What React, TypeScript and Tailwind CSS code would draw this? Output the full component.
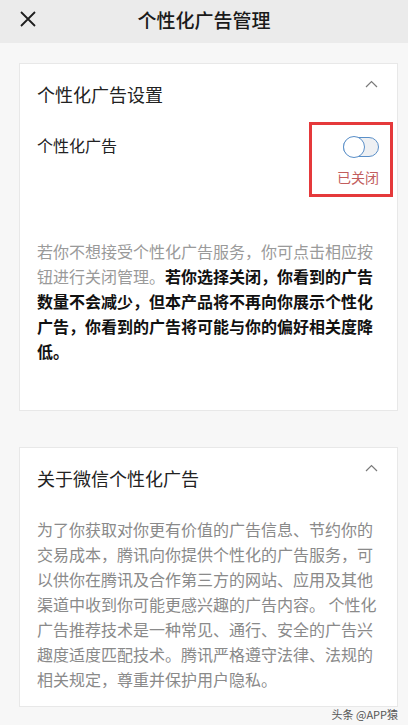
import React from "react";

const font = { fontFamily: '"Noto Sans CJK SC", "Noto Sans", sans-serif' };

function ChevronUp() {
  return (
    <svg width="13" height="8" viewBox="0 0 13 8" fill="none" className="absolute right-[19px] top-[16px]">
      <path d="M1 7L6.5 1.5L12 7" stroke="#7a7a7a" strokeWidth="1.2" />
    </svg>
  );
}

function CloseIcon() {
  return (
    <svg width="18" height="18" viewBox="0 0 18 18" fill="none">
      <path d="M2 2L16 16M16 2L2 16" stroke="#1e1e1e" strokeWidth="1.8" />
    </svg>
  );
}

function Toggle() {
  return (
    <div className="relative h-[22px] w-[36px]">
      <div className="absolute left-0 top-[1px] h-[20px] w-[36px] rounded-full border border-[#5a8fc8] bg-[#eef0f3]" />
      <div className="absolute left-0 top-0 h-[22px] w-[22px] rounded-full border border-[#5a8fc8] bg-white" />
    </div>
  );
}

export default function App() {
  return (
    <div className="min-h-[725px] w-full bg-[#f7f7f7]" style={font}>
      {/* top bar */}
      <div className="relative flex h-[43px] items-center justify-center bg-[#ebebeb]">
        <div className="absolute left-[19px] top-[10px]">
          <CloseIcon />
        </div>
        <div className="-mt-[4px] text-[19px] font-medium leading-[26px] text-[#1a1a1a]">个性化广告管理</div>
      </div>

      <div className="px-[19px] pt-[20px] pr-[10px]">
        {/* settings card */}
        <div className="relative border border-[#e8e8e8] bg-white pb-[46px] pl-[17px] pr-[20px] pt-[17px]">
          <ChevronUp />
          <div className="text-[18px] leading-[26px] text-[#222]">个性化广告设置</div>
          <div className="-mr-[16px] mt-[15px] flex justify-between">
            <div className="pt-[11px] text-[16px] leading-[24px] text-[#222]">个性化广告</div>
            <div className="flex h-[75px] w-[84px] flex-col items-end border-[3px] border-[#e5393b] pr-[11px] pt-[11px]">
              <Toggle />
              <div className="mt-[9px] text-[14px] leading-[20px] text-[#c25d5d]">已关闭</div>
            </div>
          </div>
          <p className="mt-[42px] text-[16px] leading-[25px] text-[#9a9a9a]">
            若你不想接受个性化广告服务，你可点击相应按钮进行关闭管理。
            <span className="font-bold leading-[25px] text-[#111]">
              若你选择关闭，你看到的广告数量不会减少，但本产品将不再向你展示个性化广告，你看到的广告将可能与你的偏好相关度降低。
            </span>
          </p>
        </div>

        {/* about card */}
        <div className="relative mt-[36px] border border-[#e8e8e8] bg-white pb-[14px] pl-[17px] pr-[20px] pt-[17px]">
          <ChevronUp />
          <div className="text-[18px] leading-[26px] text-[#222]">关于微信个性化广告</div>
          <p className="mt-[26px] text-[16px] leading-[25px] text-[#8a8a8a]">
            为了你获取对你更有价值的广告信息、节约你的交易成本，腾讯向你提供个性化的广告服务，可以供你在腾讯及合作第三方的网站、应用及其他渠道中收到你可能更感兴趣的广告内容。 个性化广告推荐技术是一种常见、通行、安全的广告兴趣度适度匹配技术。腾讯严格遵守法律、法规的相关规定，尊重并保护用户隐私。
          </p>
        </div>

        <div className="flex justify-end">
          <span className="text-[11px] leading-[14px] text-[#555]">头条 @APP猿</span>
        </div>
      </div>
    </div>
  );
}
